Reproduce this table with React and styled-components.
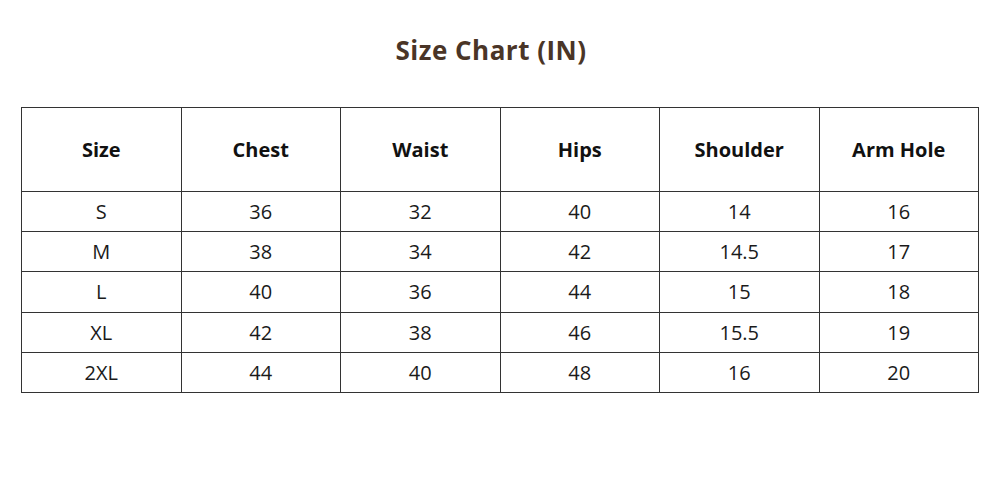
import React from "react";
import styled, { createGlobalStyle } from "styled-components";

const Global = createGlobalStyle`
  html, body { margin: 0; padding: 0; background: #fff; }
  body { font-family: "Open Sans", "Liberation Sans", sans-serif; }
`;

const Page = styled.div`
  width: 1000px;
  height: 500px;
  box-sizing: border-box;
  padding: 34px 21px 0 21px;
  display: flex;
  flex-direction: column;
  align-items: center;
`;

const Title = styled.h1`
  margin: 0;
  font-size: 26px;
  line-height: 32px;
  font-weight: 700;
  color: #4a3527;
  letter-spacing: 0.5px;
  margin-left: -18px;
`;

const Table = styled.table`
  margin-top: 41px;
  width: 958px;
  border-collapse: collapse;
  table-layout: fixed;
  color: #111;
`;

const Head = styled.th`
  height: 83px;
  border: 1px solid #333;
  font-size: 20px;
  font-weight: 700;
  text-align: center;
  padding: 0;
  color: #111;
`;

const Cell = styled.td`
  height: 39.2px;
  border: 1px solid #333;
  font-size: 20px;
  font-weight: 400;
  text-align: center;
  padding: 0;
  color: #1a1a1a;
`;

const headers = ["Size", "Chest", "Waist", "Hips", "Shoulder", "Arm Hole"];
const rows = [
  ["S", "36", "32", "40", "14", "16"],
  ["M", "38", "34", "42", "14.5", "17"],
  ["L", "40", "36", "44", "15", "18"],
  ["XL", "42", "38", "46", "15.5", "19"],
  ["2XL", "44", "40", "48", "16", "20"],
];

export default function App() {
  return (
    <>
      <Global />
      <Page>
        <Title>Size Chart (IN)</Title>
        <Table>
          <thead>
            <tr>
              {headers.map((h) => (
                <Head key={h}>{h}</Head>
              ))}
            </tr>
          </thead>
          <tbody>
            {rows.map((r) => (
              <tr key={r[0]}>
                {r.map((c, i) => (
                  <Cell key={i}>{c}</Cell>
                ))}
              </tr>
            ))}
          </tbody>
        </Table>
      </Page>
    </>
  );
}
